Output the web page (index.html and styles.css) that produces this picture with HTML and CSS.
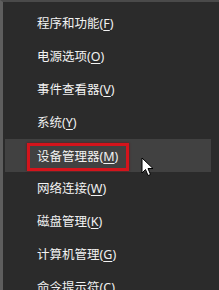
FILE: index.html
```html
<!DOCTYPE html>
<html lang="zh-CN">
<head>
  <meta charset="UTF-8">
  <title>Win+X 菜单</title>
  <link rel="stylesheet" href="styles.css">
</head>
<body>

  <!-- 快速链接菜单 -->
  <ul class="menu">
    <li class="menu-item">程序和功能(<u>F</u>)</li>
    <li class="menu-item">电源选项(<u>O</u>)</li>
    <li class="menu-item">事件查看器(<u>V</u>)</li>
    <li class="menu-item">系统(<u>Y</u>)</li>
    <li class="menu-item hover"><span class="mark">设备管理器(<u>M</u>)</span></li>
    <li class="menu-item">网络连接(<u>W</u>)</li>
    <li class="menu-item">磁盘管理(<u>K</u>)</li>
    <li class="menu-item">计算机管理(<u>G</u>)</li>
    <li class="menu-item">命令提示符(<u>C</u>)</li>
  </ul>

  <!-- 鼠标指针 -->
  <svg class="cursor" width="13" height="20" viewBox="0 0 13 20">
    <path d="M1 1 L1 16 L4.5 12.5 L7 18.5 L9.5 17.5 L7 11.5 L12 11.5 Z" fill="#fff" stroke="#000" stroke-width="1"/>
  </svg>

</body>
</html>
```

FILE: styles.css
```css
/* 基本样式 */
body {
  margin: 0;
  background: #2b2b2b;
  font-family: "Noto Sans", "Noto Sans CJK SC", sans-serif;
  overflow: hidden;
}

.menu {
  list-style: none;
  margin: 0;
  padding: 5px 8px 0 2px;
  width: 206px;
  height: 290px;
  background: #2b2b2b;
  border-left: 3px solid #5e5e5e;
  border-top: 2px solid #4a4a4a;
  border-right: 3px solid #444;
  overflow: hidden;
}

.menu-item {
  height: 33px;
  line-height: 33px;
  padding-left: 32px;
  font-size: 12.5px;
  color: #f2f2f2;
  white-space: nowrap;
}

.menu-item u {
  text-underline-offset: 2px;
}

.menu-item.hover {
  background: #414141;
}

/* 红色标注框 */
.mark {
  display: inline-block;
  height: 22px;
  line-height: 22px;
  margin-left: -10px;
  padding: 0 8px 0 7px;
  border: 3px solid #d4141c;
  box-shadow: 0 0 2px #6b0b0f;
  vertical-align: middle;
}

.cursor {
  position: absolute;
  left: 141px;
  top: 157px;
}
```
